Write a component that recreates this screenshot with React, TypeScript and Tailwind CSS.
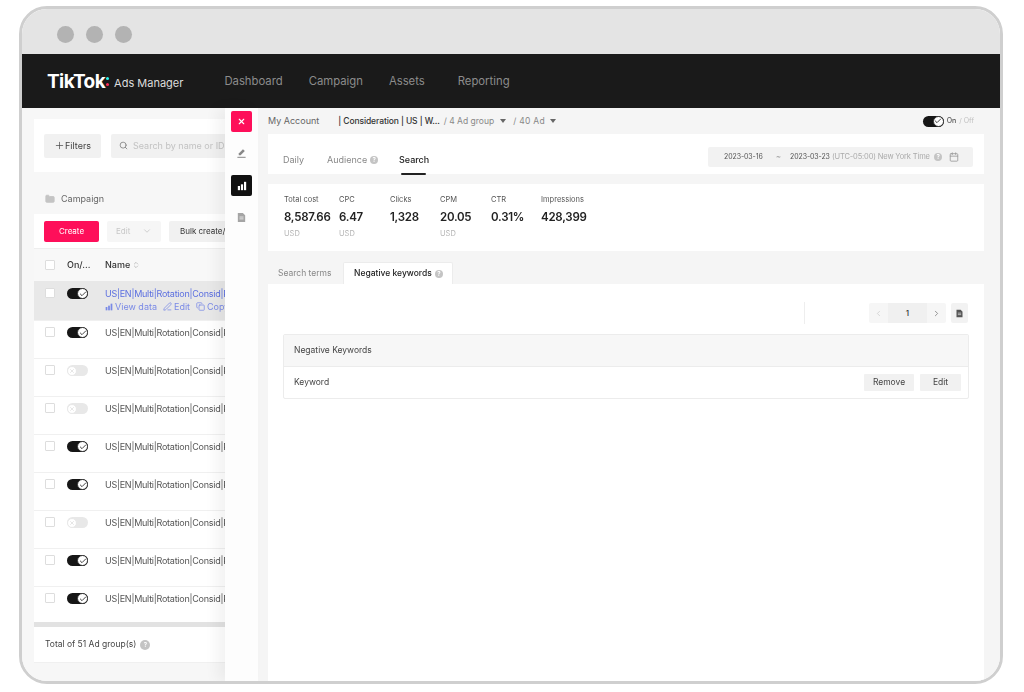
import { Calendar, Check, ChevronDown, ChevronLeft, ChevronRight, ChevronsUpDown, Copy, Folder, PenLine, Plus, Search, X } from "lucide-react";

const rows = [true, true, false, false, true, true, false, true, true];
const metrics = [
  { label: "Total cost", value: "8,587.66", unit: "USD", width: "w-[55px]" },
  { label: "CPC", value: "6.47", unit: "USD", width: "w-[51px]" },
  { label: "Clicks", value: "1,328", unit: "", width: "w-[50px]" },
  { label: "CPM", value: "20.05", unit: "USD", width: "w-[51px]" },
  { label: "CTR", value: "0.31%", unit: "", width: "w-[50px]" },
  { label: "Impressions", value: "428,399", unit: "", width: "w-[70px]" },
];

function Toggle({ on }: { on: boolean }) {
  if (!on) {
    return (
      <div className="flex h-[11px] w-[21px] items-center rounded-full bg-[#e8e8e8]">
        <div className="flex size-[10px] items-center justify-center rounded-full border border-[#e8e8e8] bg-white">
          <X className="size-[6px] text-[#cccccc]" strokeWidth={2} />
        </div>
      </div>
    );
  }
  return (
    <div className="flex h-[11px] w-[21px] items-center justify-end rounded-full bg-[#161616]">
      <div className="flex size-[11px] items-center justify-center rounded-full border border-[#333333] bg-white">
        <Check className="size-[8px] text-[#222222]" strokeWidth={2.5} />
      </div>
    </div>
  );
}

function Help({ className }: { className: string }) {
  return (
    <span className={`inline-flex size-[8px] shrink-0 items-center justify-center rounded-full bg-[#c4c4c4] text-[6px] font-bold leading-none text-white ${className}`}>
      ?
    </span>
  );
}

function Checkbox() {
  return <div className="size-[10px] shrink-0 rounded-[1px] border border-[#dddddd] bg-white" />;
}

function BarsIcon({ className }: { className: string }) {
  return (
    <svg viewBox="0 0 12 12" className={className} fill="currentColor">
      <rect x="1" y="6" width="2.6" height="5" />
      <rect x="4.7" y="4" width="2.6" height="7" />
      <rect x="8.4" y="1" width="2.6" height="10" />
    </svg>
  );
}

function DocIcon({ className }: { className: string }) {
  return (
    <svg viewBox="0 0 12 12" className={className} fill="currentColor">
      <path d="M2 1h5.5L10 3.5V11H2z" />
      <path d="M3.8 5.5h4.4M3.8 7.5h4.4" stroke="#fafafa" strokeWidth="0.8" />
    </svg>
  );
}

function PenIcon({ className }: { className: string }) {
  return (
    <svg viewBox="0 0 12 12" className={className} fill="currentColor">
      <path d="M7.6 1.4l2 2L5 8H3V6z" />
      <rect x="1.5" y="9.6" width="9" height="1.1" />
    </svg>
  );
}

function LeftColumn() {
  return (
    <div className="h-full w-[203px] shrink-0 overflow-hidden bg-[#f7f7f7] pl-3 pt-[11px]">
      <div className="w-[420px]">
        <div className="flex h-[53px] items-center gap-[10px] bg-white pl-[10px]">
          <div className="flex h-[24px] w-[57px] items-center justify-center rounded-[2px] bg-[#f1f1f1] text-[9px] text-[#444444]">
            <Plus className="size-[11px]" strokeWidth={1.5} />
            Filters
          </div>
          <div className="flex h-[24px] w-[170px] items-center gap-[5px] rounded-[2px] bg-[#f1f1f1] pl-[8px] text-[9px] text-[#c2c2c2]">
            <Search className="size-[9px] text-[#777777]" />
            Search by name or ID
          </div>
        </div>
        <div className="flex h-[42px] items-center gap-[6px] pl-[11px] pt-[12px] text-[9px] text-[#666666]">
          <Folder className="size-[10px] fill-[#c4c4c4] text-[#c4c4c4]" />
          Campaign
        </div>
        <div className="bg-white">
          <div className="flex h-[34px] items-center gap-[8px] pl-[10px] text-[8px]">
            <div className="flex h-[21px] w-[55px] items-center justify-center rounded-[2px] bg-[#fe0f5a] text-white">Create</div>
            <div className="flex h-[21px] w-[54px] items-center justify-between rounded-[2px] bg-[#f6f6f6] px-[9px] text-[#c8c8c8]">
              Edit
              <ChevronDown className="size-[10px]" />
            </div>
            <div className="flex h-[21px] w-[90px] items-center rounded-[2px] bg-[#f1f1f1] pl-[11px] text-[#333333]">Bulk create/Edit</div>
          </div>
          <div className="flex h-[33px] items-center border-t border-[#eeeeee] bg-[#f8f8f8] pl-[11px] text-[9px] font-medium text-[#333333]">
            <Checkbox />
            <span className="ml-[12px] w-[38px]">On/...</span>
            <span>Name</span>
            <ChevronsUpDown className="ml-[2px] size-[8px] text-[#aaaaaa]" />
          </div>
          {rows.map((on, i) => (
            <div
              key={i}
              className={`flex items-start pl-[11px] text-[9px] leading-[13px] ${i === 0 ? "h-[39px] bg-[#e8e8e8] pt-[6px]" : i === 8 ? "h-[36px] border-t border-[#f0f0f0] pt-[5px]" : "h-[38px] border-t border-[#f0f0f0] pt-[5px]"}`}
            >
              <div className="pt-[1px]">
                <Checkbox />
              </div>
              <div className="ml-[12px] w-[38px] shrink-0 pt-[1px]">
                <Toggle on={on} />
              </div>
              <div>
                <div className={`whitespace-nowrap tracking-[-0.25px] ${i === 0 ? "text-[#5b6fe0]" : "text-[#555555]"}`}>US|EN|Multi|Rotation|Consid|Prospecting</div>
                {i === 0 && (
                  <div className="flex items-center text-[#7a8ae6]">
                    <BarsIcon className="mr-[2px] size-[8px]" />
                    <span>View data</span>
                    <PenLine className="ml-[6px] mr-[2px] size-[9px]" />
                    <span>Edit</span>
                    <Copy className="ml-[6px] mr-[2px] size-[9px]" />
                    <span>Copy</span>
                  </div>
                )}
              </div>
            </div>
          ))}
          <div className="h-[5px] bg-[#e2e2e2]" />
          <div className="flex h-[36px] items-center gap-[4px] border-b border-[#f0f0f0] pl-[11px] text-[8.5px] text-[#444444]">
            Total of 51 Ad group(s)
            <Help className="size-[10px]" />
          </div>
        </div>
      </div>
    </div>
  );
}

function Rail() {
  return (
    <div className="relative z-10 flex h-full w-[33px] shrink-0 flex-col items-center bg-[#fdfdfd] pt-[3px] shadow-[-8px_0_14px_rgba(0,0,0,0.05)]">
      <div className="flex size-[21px] items-center justify-center rounded-[2px] bg-[#fe0f5a] text-white">
        <X className="size-[9px]" strokeWidth={3} />
      </div>
      <PenIcon className="mt-[16px] size-[11px] text-[#888888]" />
      <div className="mt-[16px] flex size-[21px] items-center justify-center rounded-[2px] bg-[#111111] text-white">
        <BarsIcon className="size-[10px]" />
      </div>
      <DocIcon className="mt-[16px] size-[11px] text-[#a5a5a5]" />
    </div>
  );
}

function Panel() {
  return (
    <div className="flex h-full min-w-0 flex-1 flex-col bg-[#f5f5f5] pl-[10px] pr-[16px]">
      <div className="flex h-[26px] shrink-0 items-center whitespace-nowrap text-[8.5px] text-[#666666]">
        <span className="text-[9px]">My Account</span>
        <span className="ml-[19px] font-medium tracking-[-0.1px] text-[#333333]">| Consideration | US | W...</span>
        <span className="ml-[4px] text-[#888888]">/ 4 Ad group</span>
        <div className="ml-[6px] size-0 border-x-[3px] border-t-[4px] border-x-transparent border-t-[#666666]" />
        <span className="ml-[7px] tracking-[0.3px] text-[#888888]">/ 40 Ad</span>
        <div className="ml-[5px] size-0 border-x-[3px] border-t-[4px] border-x-transparent border-t-[#666666]" />
        <div className="ml-auto mr-[10px] flex items-center gap-[3px] text-[7px]">
          <Toggle on />
          <span className="font-medium text-[#555555]">On</span>
          <span className="text-[#c0c0c0]">/ Off</span>
        </div>
      </div>
      <div className="flex h-[40px] shrink-0 items-center bg-white pl-[15px] pr-[11px] text-[9px] text-[#888888]">
        <span className="w-[44px] pt-[12px]">Daily</span>
        <span className="flex w-[72px] items-center gap-[3px] pt-[12px]">
          Audience
          <Help className="" />
        </span>
        <span className="relative pt-[12px] font-medium text-[#222222]">
          Search
          <span className="absolute -bottom-[8px] left-[2px] h-[2px] w-[25px] rounded bg-[#222222]" />
        </span>
        <div className="ml-auto mt-[6px] flex h-[20px] w-[265px] items-center whitespace-nowrap rounded-[2px] bg-[#f2f2f2] pl-[16px] text-[7.5px] tracking-[-0.15px] text-[#555555]">
          <span className="w-[36px] text-[7px] tracking-[-0.1px]">2023-03-16</span>
          <span className="ml-[16px] w-[14px] text-[#999999]">~</span>
          <span className="w-[36px] text-[7px] tracking-[-0.1px]">2023-03-23</span>
          <span className="ml-[6px] w-[100px] text-[#aaaaaa]">(UTC-05:00) New York Time</span>
          <Help className="ml-[2px]" />
          <Calendar className="ml-[7px] size-[10px] text-[#999999]" />
        </div>
      </div>
      <div className="mt-[10px] flex h-[67px] shrink-0 bg-white pl-[16px] pt-[11px]">
        {metrics.map((m) => (
          <div key={m.label} className={m.width}>
            <div className="text-[7.5px] leading-[10px] text-[#555555]">{m.label}</div>
            <div className="mt-[3px] text-[11.5px] font-semibold leading-[18px] tracking-[-0.25px] text-[#222222]">{m.value}</div>
            <div className="mt-[3px] text-[7.5px] leading-[10px] text-[#b5b5b5]">{m.unit}</div>
          </div>
        ))}
      </div>
      <div className="mt-[11px] flex h-[22px] shrink-0 items-center pl-[10px] text-[8.5px] text-[#888888]">
        <span className="w-[65px]">Search terms</span>
        <div className="flex h-[22px] w-[110px] items-center gap-[3px] rounded-t-[2px] border-x border-t border-[#ececec] bg-white pl-[10px] font-medium text-[#222222]">
          Negative keywords
          <Help className="" />
        </div>
      </div>
      <div className="flex-1 bg-white px-[15px] pt-[18px]">
        <div className="flex h-[22px] items-center justify-end pr-px">
          <div className="mr-[64px] h-[22px] w-px bg-[#eeeeee]" />
          <div className="flex h-[20px] w-[77px] items-center overflow-hidden rounded-[2px] bg-[#f6f6f6]">
            <div className="flex h-full w-[19px] items-center justify-center text-[#cccccc]">
              <ChevronLeft className="size-[9px]" />
            </div>
            <div className="flex h-full flex-1 items-center justify-center bg-[#f0f0f0] text-[8px] font-medium text-[#333333]">1</div>
            <div className="flex h-full w-[19px] items-center justify-center text-[#777777]">
              <ChevronRight className="size-[9px]" />
            </div>
          </div>
          <div className="ml-[5px] flex h-[20px] w-[17px] items-center justify-center rounded-[2px] bg-[#f2f2f2]">
            <DocIcon className="size-[9px] text-[#555555]" />
          </div>
        </div>
        <div className="mt-[10px] rounded-[2px] border border-[#ececec] text-[8.5px] text-[#444444]">
          <div className="flex h-[32px] items-center border-b border-[#ececec] bg-[#f7f7f7] pl-[10px]">Negative Keywords</div>
          <div className="flex h-[31px] items-center pl-[10px] pr-[7px]">
            Keyword
            <div className="ml-auto flex h-[17px] w-[50px] items-center justify-center rounded-[1px] bg-[#f1f1f1]">Remove</div>
            <div className="ml-[6px] flex h-[17px] w-[41px] items-center justify-center rounded-[1px] bg-[#f1f1f1]">Edit</div>
          </div>
        </div>
      </div>
    </div>
  );
}

export default function App() {
  return (
    <div className="h-[692px] w-[1024px] overflow-hidden bg-white pl-[19px] pt-[6px] font-['Inter','Liberation_Sans',sans-serif]">
      <div className="flex h-[678px] w-[984px] flex-col overflow-hidden rounded-[28px] border-[3px] border-[#cfcfcf] blur-[0.35px]">
        <div className="flex h-[45px] shrink-0 items-center gap-[12px] bg-[#e4e4e4] pl-[35px] pt-[6px]">
          <div className="size-[17px] rounded-full bg-[#b3b3b3]" />
          <div className="size-[17px] rounded-full bg-[#b3b3b3]" />
          <div className="size-[17px] rounded-full bg-[#b3b3b3]" />
        </div>
        <div className="flex h-[54px] shrink-0 items-center bg-[#1a1a1a] pl-[25px]">
          <span className="text-[19px] font-bold leading-none tracking-[-0.6px] text-white">TikTok</span>
          <span className="ml-[1px] flex flex-col gap-[3px]">
            <span className="size-[3px] rounded-full bg-[#25f4ee]" />
            <span className="size-[3px] rounded-full bg-[#fe2c55]" />
          </span>
          <span className="ml-[5px] mt-[4px] text-[11px] text-[#dddddd]">Ads Manager</span>
          <div className="ml-[41px] flex gap-[26px] text-[11.3px] text-[#8c8c8c]">
            <span>Dashboard</span>
            <span>Campaign</span>
            <span>Assets</span>
            <span className="ml-[7px]">Reporting</span>
          </div>
        </div>
        <div className="flex min-h-0 flex-1">
          <LeftColumn />
          <Rail />
          <Panel />
        </div>
      </div>
    </div>
  );
}
